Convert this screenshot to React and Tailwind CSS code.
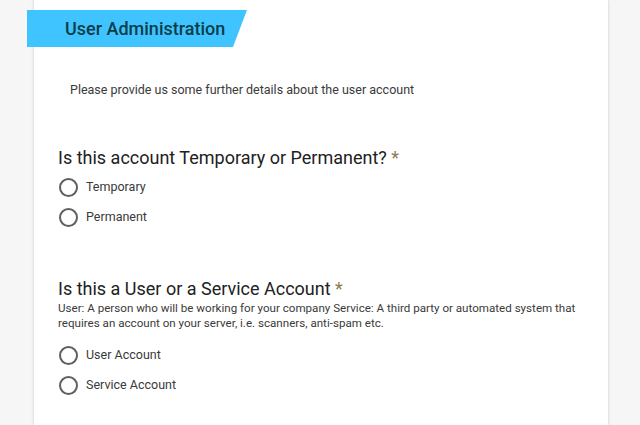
import React from "react";

function Radio({ label }) {
  return (
    <div className="flex items-center h-[30px]">
      <span className="w-[19px] h-[19px] rounded-full border-2 border-[#5f5f5f] ml-[25px] shrink-0"></span>
      <span className="ml-[8px] text-[12.5px] text-[#3a3a3a]">{label}</span>
    </div>
  );
}

export default function App() {
  return (
    <div className="min-h-screen bg-[#f6f6f6] font-['Roboto',sans-serif]" style={{ height: 425 }}>
      <div className="ml-[34px] w-[574px] h-[425px] bg-white shadow-[0_0_3px_rgba(0,0,0,0.18)] pt-[10px] overflow-visible">
        <div className="-ml-[7px] w-[220px] h-[37px] bg-[#40c4ff] [clip-path:polygon(0_0,100%_0,calc(100%-14px)_100%,0_100%)] flex items-center pl-[38px]">
          <span className="text-[18px] font-medium text-[#0b3d4a] leading-none">User Administration</span>
        </div>
        <p className="mt-[33px] pl-[36px] text-[12.5px] leading-[20px] text-[#3a3a3a]">
          Please provide us some further details about the user account
        </p>
        <h2 className="mt-[46px] pl-[24px] text-[18px] leading-[24px] text-[#212121]">
          Is this account Temporary or Permanent? <span className="text-[#8d7b4e]">*</span>
        </h2>
        <div className="mt-[2px]">
          <Radio label="Temporary" />
          <Radio label="Permanent" />
        </div>
        <h2 className="mt-[45px] pl-[24px] text-[18px] leading-[24px] text-[#212121]">
          Is this a User or a Service Account <span className="text-[#8d7b4e]">*</span>
        </h2>
        <p className="pl-[24px] w-[550px] text-[11.6px] leading-[15px] text-[#3a3a3a]">
          User: A person who will be working for your company Service: A third party or automated system that requires an account on your server, i.e. scanners, anti-spam etc.
        </p>
        <div className="mt-[9px]">
          <Radio label="User Account" />
          <Radio label="Service Account" />
        </div>
      </div>
    </div>
  );
}
